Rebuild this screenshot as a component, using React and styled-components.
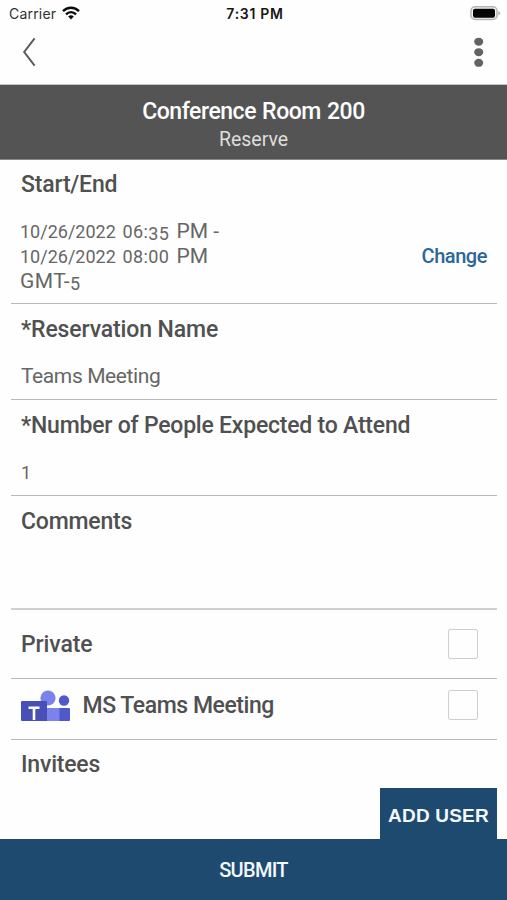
import React from "react";
import styled, { createGlobalStyle } from "styled-components";

const GlobalStyle = createGlobalStyle`
  * { box-sizing: border-box; }
  body { margin: 0; background: #fefefe; font-family: Roboto, "Liberation Sans", sans-serif; }
  button { border: 0; padding: 0; background: none; font: inherit; }
`;

const Screen = styled.div`
  display: flex;
  flex-direction: column;
  width: 507px;
  height: 900px;
  overflow: hidden;
  color: #505050;
`;

const StatusBar = styled.header`
  display: grid;
  grid-template-columns: 1fr auto 1fr;
  align-items: center;
  height: 28px;
  padding: 0 6px 0 9px;
  color: #161616;
  font-family: Inter, "Liberation Sans", sans-serif;
`;

const Carrier = styled.div`
  display: flex;
  align-items: center;
  gap: 6px;
  height: 26px;
  align-self: start;
  font-size: 14px;
  letter-spacing: 0.2px;
  color: #303030;
`;

const Clock = styled.div`
  font-size: 14px;
  font-weight: 600;
  letter-spacing: 0.7px;
  line-height: 28px;
`;

const BatteryIcon = styled.svg`
  justify-self: end;
  align-self: start;
  display: block;
  margin-top: 6px;
`;

const NavBar = styled.nav`
  display: flex;
  justify-content: space-between;
  height: 57px;
  padding: 9px 23px 0 22px;
  border-bottom: 1px solid #c4c4c4;
`;

const IconButton = styled.button`
  display: flex;
  height: 30px;
`;

const TitleBar = styled.div`
  display: flex;
  flex-direction: column;
  align-items: center;
  height: 75px;
  padding-top: 12px;
  background: #545454;
  border-bottom: 1px solid #8a8a8a;
`;

const Title = styled.h1`
  margin: 0;
  font-size: 23px;
  font-weight: 500;
  line-height: 30px;
  letter-spacing: -0.45px;
  word-spacing: 0.8px;
  color: #fff;
`;

const Subtitle = styled.div`
  font-size: 19.5px;
  line-height: 25px;
  color: #dedede;
`;

const Form = styled.main`
  flex: 1;
  padding: 0 10px 0 11px;
`;

const Section = styled.section`
  height: ${(p) => p.$height}px;
  padding: ${(p) => p.$top ?? 11}px 10px 0;
  border-bottom: ${(p) => p.$line ?? 1}px solid ${(p) => (p.$line ? "#d0d0d0" : "#b9b9b9")};
`;

const ToggleRow = styled(Section)`
  display: flex;
  align-items: center;
  padding: 0 19px ${(p) => p.$bottom ?? 0}px 10px;
`;

const Label = styled.div`
  flex: 1;
  font-size: 23px;
  font-weight: 500;
  line-height: 30px;
  letter-spacing: ${(p) => p.$tracking ?? -0.2}px;
  white-space: nowrap;
`;

const ToggleLabel = styled(Label)`
  padding-top: 2px;
`;

const Value = styled.div`
  margin-top: 19px;
  font-size: 21px;
  line-height: 25px;
  letter-spacing: ${(p) => p.$tracking ?? 0}px;
  color: #666;
  white-space: nowrap;
`;

const DateRow = styled.div`
  display: flex;
  justify-content: space-between;
  align-items: center;
  margin-top: 19px;
`;

const DateLine = styled(Value)`
  height: 25px;
  margin: 0 0 0 -1px;
`;

const Figures = styled.span`
  font-size: 18px;
  line-height: 1;
  letter-spacing: ${(p) => p.$tracking ?? 0}px;
  margin-right: ${(p) => p.$after ?? 0}px;
  vertical-align: ${(p) => (p.$drop ? "-2px" : "baseline")};
`;

const ChangeLink = styled.button`
  font-size: 20px;
  font-weight: 500;
  line-height: 25px;
  letter-spacing: -0.45px;
  color: #2a669a;
`;

const Checkbox = styled.div`
  width: 30px;
  height: 30px;
  border: 1.5px solid #cfcfcf;
  border-radius: 2px;
`;

const TeamsIcon = styled.svg`
  display: block;
  margin: 2px 13px 0 -0.5px;
`;

const InviteesRow = styled.div`
  display: flex;
  justify-content: space-between;
  height: 99px;
  padding: 10px 0 0 10px;
`;

const AddUser = styled.button`
  align-self: flex-end;
  width: 117px;
  height: 51px;
  padding-top: 4px;
  background: #1d4a6e;
  color: #f3f8fc;
  font-family: "Liberation Sans", Arial, sans-serif;
  font-size: 19px;
  font-weight: 700;
  letter-spacing: 0.2px;
  white-space: nowrap;
`;

const Submit = styled.button`
  height: 61px;
  background: #1d4a6e;
  color: #f3f8fc;
  font-size: 20px;
  font-weight: 500;
  letter-spacing: -0.7px;
`;

export default function App() {
  return (
    <Screen>
      <GlobalStyle />
      <StatusBar>
        <Carrier>
          Carrier
          <svg width="18" height="14" viewBox="0 0 18 14" fill="none" stroke="#0a0a0a" strokeWidth="2.4">
            <path d="M1 5.2 C5.4 .6 12.6 .6 17 5.2" />
            <path d="M4 8.3 C6.8 5.4 11.2 5.4 14 8.3" />
            <path d="M6.2 10.6 Q9 8 11.8 10.6 L9 13.4 Z" fill="#0a0a0a" stroke="none" />
          </svg>
        </Carrier>
        <Clock>7:31 PM</Clock>
        <BatteryIcon width="31" height="15" viewBox="0 0 31 15">
          <rect x="1" y="0.8" width="26" height="12.6" rx="4" fill="#f2f2f2" stroke="#b4b4b4" strokeWidth="1.5" />
          <rect x="3" y="2.7" width="22" height="9" rx="2" fill="#050505" />
          <path d="M28.3 5 Q30.2 5.8 30.2 7.2 Q30.2 8.6 28.3 9.4 Z" fill="#b4b4b4" />
        </BatteryIcon>
      </StatusBar>
      <NavBar>
        <IconButton aria-label="Back">
          <svg width="14" height="30" viewBox="0 0 14 30" fill="none" stroke="#5a5a5a" strokeWidth="2">
            <path d="M12.6 1.4 L2.2 15 L12.6 28.6" />
          </svg>
        </IconButton>
        <IconButton aria-label="More">
          <svg width="11" height="30" viewBox="0 0 11 30" fill="#636363">
            <ellipse cx="5.7" cy="4.7" rx="4.5" ry="4" />
            <ellipse cx="5.7" cy="15.2" rx="4.5" ry="4" />
            <ellipse cx="5.7" cy="25.8" rx="4.5" ry="4" />
          </svg>
        </IconButton>
      </NavBar>
      <TitleBar>
        <Title>Conference Room 200</Title>
        <Subtitle>Reserve</Subtitle>
      </TitleBar>
      <Form>
        <Section $height={144} $top={10}>
          <Label>Start/End</Label>
          <DateRow>
            <div>
              <DateLine>
                <Figures $after={1.5}>10/26/2022</Figures> <Figures $tracking={0.4}>06:</Figures>
                <Figures $tracking={0.4} $after={2} $drop>35</Figures> PM -
              </DateLine>
              <DateLine>
                <Figures $after={1.5}>10/26/2022</Figures> <Figures $tracking={0.4} $after={2}>08:00</Figures> PM
              </DateLine>
              <DateLine $tracking={0.4}>GMT-<Figures $drop>5</Figures></DateLine>
            </div>
            <ChangeLink>Change</ChangeLink>
          </DateRow>
        </Section>
        <Section $height={96}>
          <Label $tracking={-0.13}>*Reservation Name</Label>
          <Value $tracking={-0.4}>Teams Meeting</Value>
        </Section>
        <Section $height={96}>
          <Label $tracking={-0.22}>*Number of People Expected to Attend</Label>
          <Value><Figures>1</Figures></Value>
        </Section>
        <Section $height={114} $line={2}>
          <Label>Comments</Label>
        </Section>
        <ToggleRow $height={69}>
          <ToggleLabel $tracking={-0.1}>Private</ToggleLabel>
          <Checkbox />
        </ToggleRow>
        <ToggleRow $height={61} $bottom={9}>
          <TeamsIcon width="49" height="32" viewBox="0 0 49 32">
            <circle cx="27" cy="8" r="7.6" fill="#7b83eb" />
            <circle cx="43" cy="10.5" r="5.2" fill="#5059c9" />
            <path d="M37 18 H48 Q49 18 49 19 V30 Q49 31 48 31 H37 Z" fill="#5059c9" />
            <path d="M25 18 H38.5 V31 H25 Z" fill="#7b83eb" />
            <path d="M0 12 Q0 11 1 11 H25 Q26 11 26 12 V31 H1 Q0 31 0 30 Z" fill="#4750b8" />
            <path d="M7.5 17.8 H18.5 M13 17.8 V30" fill="none" stroke="#fff" strokeWidth="2.6" />
          </TeamsIcon>
          <ToggleLabel $tracking={-0.45}>MS Teams Meeting</ToggleLabel>
          <Checkbox />
        </ToggleRow>
        <InviteesRow>
          <Label>Invitees</Label>
          <AddUser>ADD USER</AddUser>
        </InviteesRow>
      </Form>
      <Submit>SUBMIT</Submit>
    </Screen>
  );
}
